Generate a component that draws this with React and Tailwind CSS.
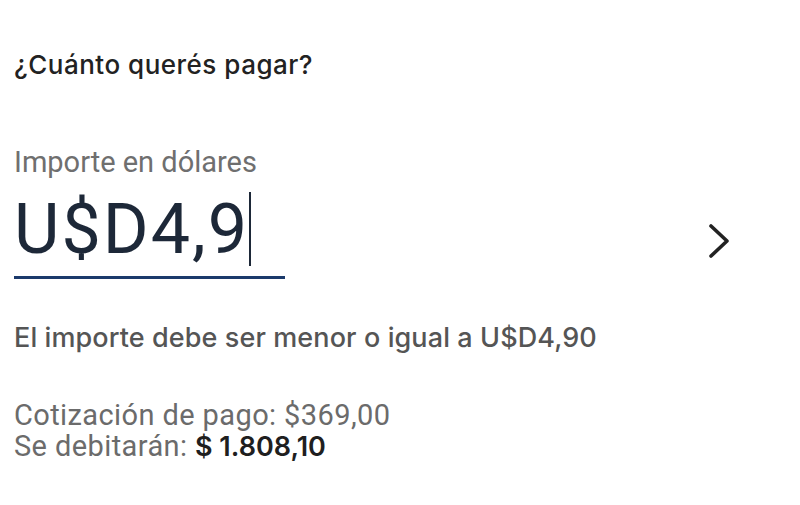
import React from 'react';

const App = () => {
  return (
    <div className="w-[800px] h-[505px] bg-white px-[14px] pt-[49px] font-['Inter','Noto_Sans',sans-serif]">
      <h1 className="text-[26px] leading-[32px] font-medium tracking-[0.5px] text-[#222]">¿Cuánto querés pagar?</h1>

      <div className="mt-[64px] flex items-start justify-between">
        <div>
          <label className="block text-[29px] leading-[34px] text-[#6f6f6f] font-['Roboto',sans-serif]">
            Importe en dólares
          </label>
          <div className="mt-[10px] w-[271px] border-b-[3px] border-[#1b3a6b] pb-[7px]">
            <div className="flex items-center h-[80px]">
              <span className="text-[70px] leading-[80px] text-[#1d2838] font-['Roboto',sans-serif] tracking-[2px]">U$D4,9</span>
              <span className="w-[2px] h-[74px] bg-[#1d2838]" />
            </div>
          </div>
        </div>
        <svg className="mr-[56px] mt-[78px] w-[22px] h-[36px] text-[#222]" viewBox="0 0 22 36" fill="none" stroke="currentColor" strokeWidth="3.6" strokeLinecap="round" strokeLinejoin="round">
          <path d="M3 3l16 15-16 15" />
        </svg>
      </div>

      <p className="mt-[43px] text-[27px] leading-[32px] font-medium tracking-[0.1px] text-[#555]">
        El importe debe ser menor o igual a U$D4,90
      </p>

      <div className="mt-[46px] text-[29px] leading-[31px] tracking-[0.4px] text-[#6b6b6b] font-['Roboto',sans-serif]">
        <p>Cotización de pago: $369,00</p>
        <p>
          Se debitarán: <span className="font-semibold tracking-normal text-[#1f1f1f] font-['Inter',sans-serif] text-[27px]">$ 1.808,10</span>
        </p>
      </div>
    </div>
  );
};

export default App;
